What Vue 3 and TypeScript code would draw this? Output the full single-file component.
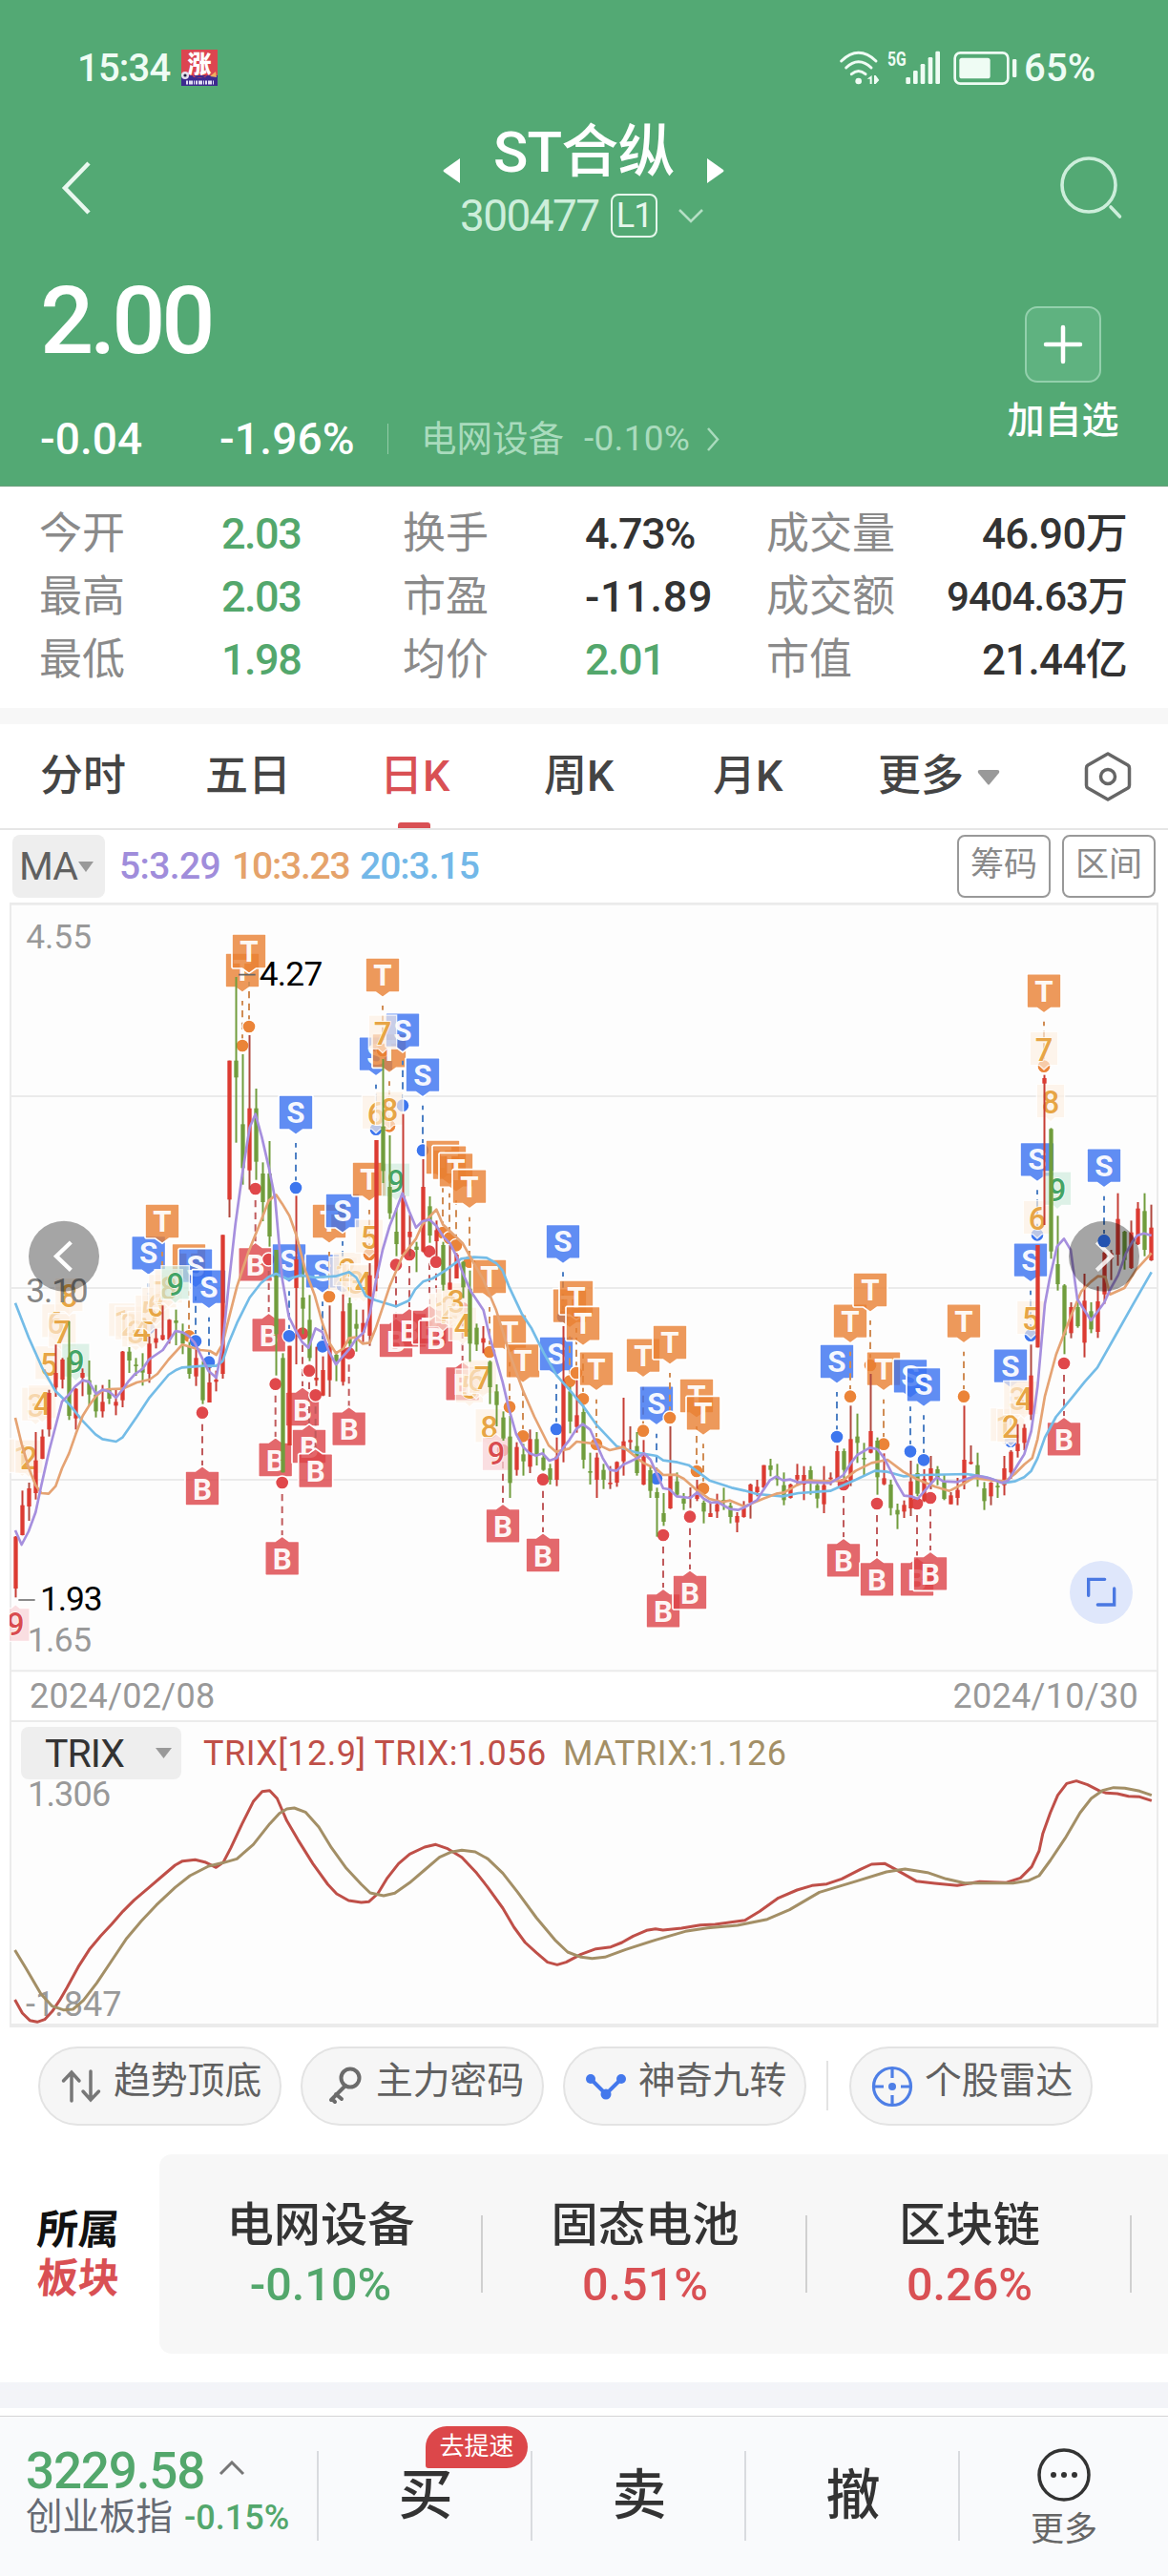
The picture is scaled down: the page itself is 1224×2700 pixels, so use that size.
<script setup lang="ts">
type Pt = [number, number]

/* ---------- quote data ---------- */
interface Stat { label: string; value: string; tone?: string }
const stats: Stat[][] = [
  [{ label: '今开', value: '2.03', tone: 'down' }, { label: '换手', value: '4.73%' }, { label: '成交量', value: '46.90万' }],
  [{ label: '最高', value: '2.03', tone: 'down' }, { label: '市盈', value: '-11.89', tone: 'neg' }, { label: '成交额', value: '9404.63万', tone: 'small' }],
  [{ label: '最低', value: '1.98', tone: 'down' }, { label: '均价', value: '2.01', tone: 'down' }, { label: '市值', value: '21.44亿' }],
]
const sectors = [
  { name: '电网设备', value: '-0.10%', tone: 'down' },
  { name: '固态电池', value: '0.51%', tone: 'up' },
  { name: '区块链', value: '0.26%', tone: 'up' },
]

/* ---------- K-line chart: three drawing units per pixel ---------- */
// high, low, body top, body bottom; a fifth value of 1 marks a falling day
const candleRows: number[][] = [
  [2010,2203,2012,2175],[1867,2008,1913,2007],[1842,1962,1860,1917],[1683,1895,1772,1875],[1675,1768,1697,1767],
  [1550,1697,1560,1675],[1408,1572,1497,1543],[1450,1546,1455,1518],[1335,1645,1448,1632,1],[1545,1675,1547,1640],
  [1483,1570,1497,1512],[1458,1600,1520,1565,1],[1535,1637,1565,1618,1],[1535,1637,1588,1618],[1518,1595,1550,1578,1],
  [1548,1630,1588,1600],[1428,1605,1430,1583],[1416,1497,1430,1458,1],[1450,1506,1471,1476,1],[1435,1537,1483,1496,1],
  [1383,1528,1405,1500],[1358,1420,1388,1402],[1285,1395,1378,1392],[1328,1405,1330,1392],[1298,1410,1332,1340,1],
  [1342,1438,1368,1405,1],[1400,1515,1415,1500,1],[1420,1538,1450,1508],[1460,1595,1478,1583,1],[1480,1590,1527,1590],
  [1490,1555,1518,1525],[1063,1515,1063,1500],[515,1008,515,952],[252,773,515,568,1],[495,905,715,853,1],
  [435,920,665,860],[603,890,665,833,1],[835,1020,870,960,1],[768,1100,870,1068,1],[1110,1505,1110,1375,1],
  [1435,1810,1450,1810,1],[1412,1725,1412,1725],[940,1470,1140,1230],[1150,1375,1260,1295,1],[1252,1460,1330,1450,1],
  [1415,1538,1512,1520],[1445,1570,1488,1568],[1285,1572,1412,1520],[1430,1523,1440,1468,1],[1250,1537,1303,1525],
  [1260,1420,1278,1405,1],[1298,1430,1343,1358,1],[1298,1400,1340,1370],[1152,1412,1190,1380],[765,1240,765,1200],
  [510,900,722,862,1],[750,1013,912,995,1],[978,1130,1053,1092,1],[683,1130,940,1125],[1000,1130,1053,1070],
  [1085,1180,1100,1110,1],[825,1118,912,1115],[942,1088,973,1065,1],[1018,1130,1048,1083],[1085,1238,1095,1220,1],
  [1095,1235,1213,1235],[1120,1200,1125,1200],[1145,1262,1148,1228,1],[1175,1462,1232,1405,1],[1342,1428,1355,1408,1],
  [1350,1435,1388,1402],[1458,1595,1462,1542,1],[1533,1665,1555,1598,1],[1618,1710,1637,1703,1],[1632,1890,1697,1843,1],
  [1715,1820,1730,1802],[1720,1820,1753,1775,1],[1675,1812,1705,1792],[1683,1788,1705,1753,1],[1735,1805,1763,1802,1],
  [1783,1848,1797,1833,1],[1700,1853,1760,1833],[1350,1778,1525,1740],[1540,1687,1555,1650,1],[1520,1685,1630,1667],
  [1600,1798,1620,1770,1],[1748,1848,1806,1810,1],[1748,1890,1763,1833],[1783,1862,1802,1833,1],[1790,1862,1842,1847],
  [1775,1855,1777,1842],[1575,1820,1712,1775],[1665,1740,1708,1715],[1683,1820,1727,1812,1],[1708,1850,1760,1848],
  [1790,1890,1803,1868,1],[1858,2012,1872,1890,1],[1875,1978,1938,1965,1],[1665,1925,1820,1923],[1810,1885,1838,1880,1],
  [1875,1928,1892,1908,1],[1857,1922,1885,1890],[1833,1900,1880,1893],[1898,1970,1905,1933,1],[1903,1950,1938,1950],
  [1877,1953,1910,1933],[1858,1928,1896,1900,1],[1905,1970,1915,1950,1],[1935,1998,1947,1967],[1900,1952,1922,1950],
  [1845,1955,1848,1905],[1833,1885,1855,1872],[1787,1860,1787,1857],[1767,1822,1788,1802,1],[1783,1852,1822,1832,1],
  [1810,1913,1850,1897,1],[1845,1892,1848,1890],[1783,1850,1818,1832],[1790,1897,1818,1848],[1790,1880,1803,1835,1],
  [1845,1922,1850,1892,1],[1790,1938,1850,1910],[1810,1850,1826,1830],[1725,1840,1743,1830],[1735,1835,1743,1802,1],
  [1600,1853,1705,1840],[1625,1780,1697,1717,1],[1717,1818,1764,1768,1],[1500,1750,1680,1748],[1700,1880,1710,1825,1],
  [1750,1850,1828,1847],[1833,1945,1848,1922,1],[1908,1988,1928,1942,1],[1898,1953,1912,1933],[1773,1947,1838,1923],
  [1783,1885,1812,1877,1],[1800,1903,1830,1900],[1758,1863,1797,1835],[1790,1850,1800,1830,1],[1818,1897,1840,1893,1],
  [1872,1910,1882,1910],[1827,1913,1865,1890],[1600,1863,1770,1845],[1725,1785,1777,1783],[1748,1855,1787,1825,1],
  [1840,1928,1860,1900,1],[1840,1913,1842,1885],[1840,1890,1852,1856,1],[1758,1882,1797,1850],[1740,1830,1745,1810],
  [1658,1763,1720,1743],[1658,1740,1670,1717],[1408,1645,1505,1628],[1095,1417,1095,1417],[560,1032,570,587],
  [727,1138,730,1115,1],[1003,1238,1155,1218,1],[1218,1438,1222,1378,1],[1275,1388,1290,1372],[1275,1355,1290,1350,1],
  [1185,1448,1270,1402],[1275,1372,1303,1360,1],[1225,1387,1272,1368],[1110,1280,1118,1250],[1110,1205,1120,1138],
  [932,1160,1013,1125],[1050,1172,1053,1142,1],[1018,1170,1055,1167],[960,1095,980,1092],[932,1130,988,1110,1],
  [968,1145,1040,1143],
]
const candles = candleRows.map(([high, low, top, bottom, fall], i) => ({
  x: 49.5 + i * 21, high, low, top, h: Math.max(5, bottom - top),
  body: fall ? '#709d3d' : '#dc3b32',
  wick: fall ? '#709d3d' : i % 3 === 2 ? '#b0483f' : '#c63d35',
}))

const ma5 = '48,1992 68,2037 90,1995 112,1935 130,1850 155,1740 195,1587 215,1567 238,1538 260,1520 280,1525 302,1563 322,1550 342,1555 365,1575 385,1550 405,1522 425,1500 448,1485 468,1455 512,1425 552,1365 575,1370 594,1382 612,1402 655,1490 680,1512 700,1405 720,1210 740,1030 762,870 785,725 803,683 823,755 845,850 865,950 887,1200 908,1320 930,1365 950,1400 970,1418 992,1357 1013,1368 1034,1430 1056,1470 1100,1420 1118,1392 1143,1370 1163,1310 1183,1200 1203,1110 1225,1035 1245,985 1265,932 1287,990 1308,1040 1328,1020 1350,1015 1372,1035 1395,1070 1415,1090 1435,1130 1458,1190 1480,1240 1520,1300 1540,1385 1580,1525 1600,1610 1623,1690 1645,1730 1665,1750 1685,1757 1706,1750 1727,1773 1750,1765 1770,1733 1790,1708 1813,1672 1832,1658 1855,1675 1875,1720 1895,1765 1917,1802 1938,1805 1960,1785 1982,1775 2003,1765 2025,1750 2045,1770 2065,1815 2085,1860 2105,1863 2127,1885 2170,1890 2192,1873 2213,1893 2235,1905 2256,1903 2295,1925 2320,1928 2340,1920 2380,1897 2400,1865 2420,1835 2440,1823 2462,1835 2485,1832 2505,1840 2610,1843 2650,1820 2675,1780 2695,1755 2735,1732 2758,1737 2780,1765 2820,1845 2842,1883 2865,1885 2885,1893 2905,1870 2945,1825 2965,1838 3010,1840 3070,1820 3110,1828 3150,1843 3170,1835 3200,1785 3220,1753 3242,1680 3262,1540 3285,1280 3300,1200 3323,1100 3345,1075 3366,1110 3387,1265 3430,1332 3472,1275 3490,1235 3515,1190 3540,1120 3560,1085 3575,1065 3597,1058 3620,1065'
const ma10 = '48,1638 68,1720 90,1795 112,1850 130,1875 153,1877 175,1853 195,1797 217,1750 238,1690 260,1632 280,1600 302,1570 322,1553 342,1548 385,1547 430,1527 470,1518 495,1500 530,1455 573,1408 630,1425 660,1428 680,1440 700,1405 722,1315 745,1225 780,1120 820,1020 845,955 868,937 887,965 910,1003 932,1065 960,1175 990,1255 1015,1345 1037,1405 1056,1435 1080,1420 1097,1388 1118,1385 1140,1405 1163,1402 1180,1360 1225,1225 1265,1130 1308,1075 1328,1030 1372,983 1392,1030 1455,1090 1480,1135 1520,1205 1560,1300 1600,1430 1645,1555 1680,1635 1725,1725 1748,1745 1790,1735 1813,1713 1875,1720 1917,1740 1960,1730 2023,1780 2065,1800 2085,1818 2125,1817 2150,1830 2190,1865 2230,1893 2270,1903 2295,1898 2340,1917 2400,1892 2440,1877 2465,1873 2505,1850 2540,1835 2590,1838 2650,1835 2690,1805 2740,1780 2790,1770 2840,1808 2880,1830 2940,1855 2985,1868 3030,1845 3060,1827 3120,1835 3160,1838 3190,1815 3220,1785 3245,1765 3262,1705 3285,1570 3320,1440 3366,1320 3400,1240 3430,1210 3452,1193 3475,1195 3490,1250 3535,1230 3570,1175 3620,1120'
const ma20 = '48,1277 90,1385 132,1480 175,1555 217,1595 260,1648 300,1690 322,1705 365,1713 385,1700 430,1635 468,1577 530,1503 555,1487 573,1480 640,1475 680,1475 700,1460 720,1400 745,1340 785,1260 820,1215 845,1195 868,1185 905,1202 945,1190 990,1197 1055,1193 1098,1180 1120,1197 1150,1255 1180,1268 1245,1288 1285,1270 1305,1235 1330,1210 1360,1200 1400,1175 1450,1138 1490,1133 1530,1135 1560,1152 1580,1175 1600,1225 1640,1310 1670,1355 1710,1435 1750,1505 1790,1550 1832,1600 1875,1660 1938,1727 1960,1735 2003,1748 2065,1758 2085,1772 2130,1778 2165,1787 2190,1805 2230,1835 2300,1858 2340,1867 2380,1878 2460,1885 2510,1875 2610,1868 2690,1833 2750,1805 2790,1808 2840,1822 2900,1818 3040,1815 3100,1825 3155,1843 3190,1838 3220,1825 3242,1805 3262,1765 3285,1700 3320,1635 3366,1580 3410,1525 3450,1480 3515,1365 3560,1285 3620,1180'

// signal flags: x and the flag's top edge
const sFlags: Pt[] = [[467,1066],[615,1106],[657,1172],[930,624],[909,1090],[1014,1123],[1077,933],[1182,440],[1266,365],[1329,506],[1770,1030],[1749,1383],[2064,1538],[2631,1407],[2862,1453],[2904,1480],[3177,1421],[3240,1088],[3261,772],[3471,791]]
const tFlags: Pt[] = [[510,966],[594,1090],[762,177],[783,117],[1035,966],[1161,834],[1203,192],[1224,430],[1392,765],[1413,782],[1434,805],[1476,857],[1539,1140],[1602,1313],[1644,1405],[1791,1232],[1812,1206],[1833,1288],[1875,1430],[2022,1388],[2106,1347],[2190,1515],[2211,1570],[2673,1280],[2736,1182],[2778,1430],[3030,1280],[3282,242]]
const bDots: Pt[] = [[636,1622],[803,918],[845,1140],[866,1532],[887,1842],[951,1373],[972,1490],[992,1567],[1097,1435],[1245,1157],[1287,1125],[1350,1115],[1371,1148],[1454,1293],[1581,1740],[1707,1832],[2085,2007],[2169,1949],[2652,1848],[2757,1908],[2883,1908],[2925,1890],[3345,1467]]

interface Flag { k: string; x: number; y: number; dot: number; fill: string; solid: string; dash: string }
const flags: Flag[] = [
  ...bDots.map(([x, d]) => ({ k: 'B', x, y: d + 184, dot: d, fill: '#dc4247', solid: '#e0484b', dash: '#c05a5c' })),
  ...sFlags.map(([x, y]) => ({ k: 'S', x, y, dot: y + 291, fill: '#3871f0', solid: '#3d76ee', dash: '#4d80c4' })),
  ...tFlags.map(([x, y]) => ({ k: 'T', x, y, dot: y + 291, fill: '#e98032', solid: '#eb8438', dash: '#d08c54' })),
].sort((a, b) => a.x - b.x)

function flagPath(f: Flag): string {
  const l = f.x - 54, r = f.x + 54, t = f.y, b = f.y + 108
  return f.k === 'B'
    ? `M${l + 3} ${t}H${f.x - 22}L${f.x} ${t - 16}L${f.x + 22} ${t}H${r - 3}L${r} ${t + 3}V${b - 3}L${r - 3} ${b}H${l + 3}L${l} ${b - 3}V${t + 3}Z`
    : `M${l + 3} ${t}H${r - 3}L${r} ${t + 3}V${b - 3}L${r - 3} ${b}H${f.x + 22}L${f.x} ${b + 16}L${f.x - 22} ${b}H${l + 3}L${l} ${b - 3}V${t + 3}Z`
}

// nine-turn counters: digit, x, centre y
const counts: [string, number, number, string][] = [
  ['1',70,1762,'o'],['2',91,1765,'o'],['3',112,1600,'o'],['4',133,1593,'o'],['5',154,1470,'o'],['6',175,1338,'o'],['7',196,1368,'o'],['8',217,1256,'o'],['9',238,1462,'g'],
  ['1',385,1335,'o'],['2',406,1345,'o'],['3',427,1368,'o'],['4',446,1362,'o'],['5',469,1310,'o'],['6',490,1286,'o'],['7',511,1245,'o'],['8',530,1230,'o'],['9',551,1218,'g'],
  ['1',1079,1190,'o'],['2',1092,1175,'o'],['3',1118,1212,'o'],['4',1143,1215,'o'],['5',1161,1072,'o'],['6',1182,682,'o'],['7',1203,430,'o'],['8',1224,670,'o'],['9',1245,895,'g'],
  ['1',1392,1305,'o'],['2',1413,1290,'o'],['3',1434,1272,'o'],['4',1455,1348,'o'],['5',1476,1543,'o'],['6',1497,1518,'o'],['7',1518,1513,'o'],['8',1538,1668,'o'],['9',1560,1750,'r'],
  ['1',3157,1665,'o'],['2',3178,1667,'o'],['3',3199,1580,'o'],['4',3220,1580,'o'],['5',3241,1328,'o'],['6',3261,1013,'o'],['7',3282,482,'o'],['8',3303,647,'o'],['9',3324,922,'g'],
  ['9',49,2287,'r'],
]
const tints: Record<string, { bg: string; fg: string }> = {
  o: { bg: '#fdf0e2', fg: '#e7a545' },
  g: { bg: '#cdebdc', fg: '#43a467' },
  r: { bg: '#f8d3d7', fg: '#d94b50' },
}

/* ---------- TRIX lines ---------- */
const trix = '20,1038 30,1080 40,1103 50,1108 60,1100 70,1075 80,1040 90,1000 105,935 120,880 135,838 150,800 165,760 180,725 200,685 220,645 235,615 245,602 262,598 275,605 290,622 300,605 310,560 325,485 340,415 352,383 362,380 372,405 385,475 400,535 420,610 440,675 452,705 468,726 485,732 495,730 507,705 520,655 535,610 550,580 570,558 585,550 600,562 620,590 640,640 655,685 675,750 690,810 705,858 720,890 735,920 748,928 760,920 780,895 800,878 820,872 835,858 850,838 868,820 880,815 890,819 915,813 940,803 960,801 1000,788 1020,760 1045,718 1070,693 1090,679 1110,674 1130,658 1155,628 1170,612 1188,610 1200,625 1230,665 1255,672 1285,679 1315,667 1350,670 1370,655 1385,620 1395,570 1400,515 1410,450 1420,395 1432,358 1445,350 1460,362 1475,380 1485,388 1500,390 1515,398 1530,400 1546,412'
const matrix = '20,882 35,940 55,1020 70,1058 85,1070 98,1068 112,1040 130,985 150,915 170,845 190,790 210,740 235,685 255,648 280,618 300,607 318,595 340,550 362,485 375,452 385,438 395,435 410,448 428,495 445,560 465,625 485,675 497,702 515,711 530,703 550,670 570,630 590,590 605,574 620,568 638,573 655,595 675,640 695,700 720,780 745,850 762,888 780,904 795,908 812,904 840,880 880,850 920,823 950,812 990,804 1030,785 1060,755 1100,700 1150,665 1190,636 1215,627 1245,638 1270,658 1295,671 1360,671 1380,664 1395,648 1410,600 1430,530 1450,450 1465,405 1480,380 1495,371 1510,373 1530,382 1546,395'
</script>

<template>
  <div class="app">
    <header class="hero">
      <div class="status">
        <span class="clock">15:34</span>
        <svg class="app-icon" width="38" height="38" viewBox="0 0 38 38">
          <rect width="38" height="29" fill="#dc4550" />
          <path d="M0 27H38V38H0Z" fill="#3d2a8f" />
          <path d="M10 25Q19 34 29 25L25 29H13Z" fill="#e8404a" />
          <circle cx="4" cy="27" r="4" fill="#e6e0ee" /><circle cx="4" cy="27" r="1.6" fill="#252040" />
          <path d="M30 28L36 23L37 29Z" fill="#f0b060" />
          <text x="19" y="24" text-anchor="middle" font-size="25" font-weight="900" fill="#fff">涨</text>
          <path d="M5 34.500H35" stroke="#e3def5" stroke-width="4" stroke-dasharray="2 1 4 1 1 1" />
        </svg>
        <svg class="signals" width="194" height="42" viewBox="290 60 582 126" fill="none" stroke="#effcf4">
          <g stroke-width="9" stroke-linecap="round">
            <path d="M304 102Q331 76 358 76Q386 76 413 102M319 123Q338 104 358 104Q379 104 398 123M336 143Q358 124 380 143" />
          </g>
          <circle cx="358" cy="165" r="10" fill="#effcf4" stroke="none" />
          <path d="M385 158L400 147V174H394V158ZM407 147H412L423 162L412 174H407Z" fill="#effcf4" stroke="none" />
          <text x="449" y="116" font-size="60" font-weight="700" textLength="59" lengthAdjust="spacingAndGlyphs" fill="#effcf4" stroke="none">5G</text>
          <g fill="#effcf4" stroke="none">
            <rect x="507" y="153" width="14" height="21" rx="4" /><rect x="530" y="132" width="14" height="42" rx="4" />
            <rect x="553" y="111" width="14" height="63" rx="4" /><rect x="577" y="90" width="14" height="84" rx="4" />
            <rect x="600" y="71" width="14" height="103" rx="4" /><rect x="675" y="92" width="97" height="65" rx="8" />
            <rect x="842" y="96" width="13" height="57" rx="4" />
          </g>
          <rect x="661" y="76" width="167" height="97" rx="17" stroke-width="8" />
        </svg>
        <span class="pct">65%</span>
      </div>

      <div class="title-bar">
        <svg class="back" width="34" height="60" viewBox="0 0 34 60" fill="none" stroke="#e9f8ef" stroke-width="4.500"><path d="M30 4L5 30L30 56" /></svg>
        <svg class="tri l" width="20" height="28" viewBox="0 0 20 28"><path d="M18 1V27L1 15Q0 14 1 13Z" fill="#fff" /></svg>
        <div class="name-box">
          <h1>ST合纵</h1>
          <div class="code-row">
            <span class="code">300477</span><span class="level">L1</span>
            <svg width="28" height="16" viewBox="0 0 28 16" fill="none" stroke="#b5dfc5" stroke-width="2.500"><path d="M2 2L14 14L26 2" /></svg>
          </div>
        </div>
        <svg class="tri r" width="20" height="28" viewBox="0 0 20 28"><path d="M2 1V27L19 15Q20 14 19 13Z" fill="#fff" /></svg>
        <svg class="search" width="68" height="68" viewBox="0 0 68 68" fill="none" stroke="#cdeedb" stroke-width="3.600" stroke-linecap="round">
          <circle cx="32" cy="32" r="28" /><path d="M55 55L64.500 65" />
        </svg>
      </div>

      <div class="quote">
        <div class="quote-main">
          <div class="price">2.00</div>
          <div class="change-row">
            <span class="delta">-0.04</span><span class="ratio">-1.96%</span><i class="bar" />
            <span class="industry">电网设备</span><span class="ind-pct">-0.10%</span>
            <svg width="15" height="27" viewBox="0 0 15 27" fill="none" stroke="#a9dbbd" stroke-width="2.500"><path d="M2 2L12 13.500L2 25" /></svg>
          </div>
        </div>
        <div class="add">
          <div class="add-btn"><svg width="42" height="42" viewBox="0 0 42 42" stroke="#fff" stroke-width="4.500" stroke-linecap="round"><path d="M21 3V39M3 21H39" /></svg></div>
          <span>加自选</span>
        </div>
      </div>
    </header>

    <section class="stats">
      <div v-for="(row, r) in stats" :key="r" class="stat-row">
        <template v-for="(s, c) in row" :key="s.label">
          <span class="label">{{ s.label }}</span>
          <span class="value" :class="[s.tone, { last: c === 2 }]">{{ s.value }}</span>
        </template>
      </div>
    </section>
    <div class="band" />

    <nav class="tabs">
      <span class="t1">分时</span><span class="t2">五日</span><span class="t3 active">日K</span><span class="t4">周K</span><span class="t5">月K</span><span class="t6">更多</span>
      <svg class="caret" width="24" height="16" viewBox="0 0 24 16"><path d="M3 0H21Q24 0 23 3L13 15Q12 16 11 15L1 3Q0 0 3 0Z" fill="#999" /></svg>
      <svg class="hex" width="50" height="54" viewBox="0 0 50 54" fill="none" stroke="#666" stroke-width="3.500" stroke-linejoin="round"><path d="M25 3L46 15Q47.500 16 47.500 18V36Q47.500 38 46 39L25 51L4 39Q2.500 38 2.500 36V18Q2.500 16 4 15Z" /><circle cx="25" cy="27" r="7.500" /></svg>
    </nav>

    <div class="ma-bar">
      <span class="ma-chip">MA<svg width="16" height="11" viewBox="0 0 16 11"><path d="M0 0H16L8 11Z" fill="#999" /></svg></span>
      <span class="m5">5:3.29</span><span class="m10">10:3.23</span><span class="m20">20:3.15</span>
      <span class="btn first">筹码</span><span class="btn">区间</span>
    </div>

    <svg class="kline" width="1224" height="808" viewBox="0 18 3672 2424">
      <defs><clipPath id="plot"><rect x="30" y="18" width="3612" height="2424" /></clipPath></defs>
      <rect x="33" y="20" width="3606" height="2416" fill="#fdfdfd" />
      <g stroke="#ebebeb" stroke-width="6">
        <path d="M30 22H3642" stroke-width="8" /><path d="M30 627H3642M30 1230H3642M30 1833H3642" /><path d="M30 2434H3642" /><path d="M33 18V2442M3639 18V2442" />
      </g>
      <g clip-path="url(#plot)">
        <g v-for="(f, i) in flags" :key="'f' + i">
          <path :d="f.k === 'B' ? `M${f.x} ${f.dot + 36}V${f.y - 18}` : `M${f.x} ${f.y + 150}V${f.dot - 14}`" :stroke="f.dash" stroke-width="6" stroke-dasharray="22 16" :stroke-dashoffset="f.k === 'B' ? 0 : 8" />
          <circle :cx="f.x" :cy="f.dot" r="21" :fill="f.solid" stroke="#fff" stroke-width="4" />
          <path :d="flagPath(f)" :fill="f.fill" fill-opacity=".8" stroke="#fff" stroke-width="5" />
          <text class="flag-text" :x="f.x" :y="f.k === 'B' ? f.y + 89 : f.y + 87">{{ f.k }}</text>
        </g>
        <g v-for="([d, x, y, t], i) in counts" :key="'c' + i">
          <path v-if="t === 'r'" :d="`M${x - 44} ${y - 50}H${x - 14}L${x} ${y - 62}L${x + 14} ${y - 50}H${x + 44}V${y + 54}H${x - 44}Z`" :fill="tints[t].bg" fill-opacity=".75" stroke="#fff" stroke-opacity=".8" stroke-width="4" />
          <path v-else :d="`M${x - 44} ${y - 58}H${x + 44}V${y + 48}H${x + 14}L${x} ${y + 61}L${x - 14} ${y + 48}H${x - 44}Z`" :fill="tints[t].bg" fill-opacity=".66" stroke="#fff" stroke-opacity=".8" stroke-width="4" />
          <text class="count-text" :x="x" :y="y + 35" :fill="tints[t].fg">{{ d }}</text>
        </g>
        <g v-for="(c, i) in candles" :key="'k' + i">
          <path :d="`M${c.x} ${c.high}V${c.low}`" :stroke="c.wick" stroke-width="6" />
          <rect :x="c.x - 6.500" :y="c.top" width="13" :height="c.h" :fill="c.body" />
        </g>
        <g fill="none" stroke-width="8" stroke-linejoin="round">
          <polyline :points="ma20" stroke="#74bce7" /><polyline :points="ma10" stroke="#e5a373" /><polyline :points="ma5" stroke="#a68fde" />
        </g>
      </g>
      <path d="M750 245H803M58 2211H110" stroke="#666" stroke-width="5" />
      <g font-size="106">
        <text x="815" y="279" textLength="200">4.27</text>
        <text x="126" y="2243" textLength="197">1.93</text>
        <g fill="#999">
          <text x="82" y="161" textLength="206">4.55</text>
          <text x="86" y="2372" textLength="202">1.65</text>
          <text x="82" y="1275" textLength="196" fill="#858585">3.10</text>
        </g>
      </g>
      <g fill="#000" fill-opacity=".35"><circle cx="201" cy="1130" r="111" /><circle cx="3471" cy="1130" r="111" /></g>
      <g fill="none" stroke="#fff" stroke-width="13"><path d="M223 1086L177 1130L223 1174" /><path d="M3448 1086L3494 1130L3448 1174" stroke-opacity=".85" /></g>
      <circle cx="3471" cy="1082" r="20" fill="#2353b0" />
      <circle cx="3462" cy="2187" r="99" fill="#dfe7fb" />
      <path d="M3473 2146H3422V2197M3503 2175V2226H3451" fill="none" stroke="#4a78e2" stroke-width="10" stroke-linecap="round" />
    </svg>

    <div class="dates"><span>2024/02/08</span><span>2024/10/30</span></div>

    <section class="trix">
      <div class="trix-head">
        <span class="trix-chip">TRIX<svg width="17" height="11" viewBox="0 0 17 11"><path d="M0 0H17L8.500 11Z" fill="#999" /></svg></span>
        <span class="tx1">TRIX[12.9] TRIX:1.056</span><span class="tx2">MATRIX:1.126</span>
      </div>
      <div class="axis hi">1.306</div>
      <div class="axis lo">-1.847</div>
      <svg class="trix-plot" width="1224" height="320" viewBox="0 165 1568 960" preserveAspectRatio="none" fill="none" stroke-width="3" stroke-linejoin="round">
        <polyline :points="trix" stroke="#bf4f48" vector-effect="non-scaling-stroke" />
        <polyline :points="matrix" stroke="#a38f66" vector-effect="non-scaling-stroke" />
      </svg>
    </section>

    <div class="tools">
      <span class="pill">
        <svg width="44" height="44" viewBox="0 0 44 44" fill="none" stroke="#777" stroke-width="3.500" stroke-linecap="round"><path d="M12 37V7M3.500 16L12 7L20 16M32 6V36M24 27L32 36L40.500 27" /></svg>趋势顶底
      </span>
      <span class="pill">
        <svg width="44" height="44" viewBox="0 0 44 44" fill="none" stroke="#6b6b6b" stroke-width="4" stroke-linecap="round"><circle cx="29" cy="13" r="9.500" /><path d="M24 21L9 36M14 30L20 35M10 35L13 38" /></svg>主力密码
      </span>
      <span class="pill">
        <svg width="44" height="44" viewBox="0 0 44 44" fill="none" stroke="#4478ec" stroke-width="4"><path d="M6 14L22 30L38 14" /><g fill="#4478ec" stroke="none"><circle cx="6" cy="14" r="5" /><circle cx="38" cy="14" r="5" /><circle cx="22" cy="30" r="5.500" /></g></svg>神奇九转
      </span>
      <i />
      <span class="pill">
        <svg width="44" height="44" viewBox="0 0 44 44" fill="none" stroke="#4e7fe6" stroke-width="3.200"><circle cx="22" cy="22" r="19.500" /><path d="M22 3V13M22 31V41M3 22H13M31 22H41" /><circle cx="22" cy="22" r="4" fill="#4e7fe6" stroke="none" /></svg>个股雷达
      </span>
    </div>

    <section class="sectors">
      <div class="sec-title"><span>所属</span><span class="up">板块</span></div>
      <div class="sec-list">
        <div v-for="s in sectors" :key="s.name" class="sec"><b>{{ s.name }}</b><em :class="s.tone">{{ s.value }}</em></div>
      </div>
    </section>
    <div class="band2" />

    <footer class="dock">
      <div class="index">
        <div class="idx-top">3229.58<svg width="28" height="16" viewBox="0 0 28 16" fill="none" stroke="#777" stroke-width="3"><path d="M2 14L14 2L26 14" /></svg></div>
        <div class="idx-sub">创业板指<span>-0.15%</span></div>
      </div>
      <div class="act">买<span class="tag">去提速</span></div>
      <div class="act">卖</div>
      <div class="act">撤</div>
      <div class="more">
        <svg width="60" height="60" viewBox="0 0 60 60"><circle cx="30" cy="30" r="26" fill="none" stroke="#333" stroke-width="3.500" /><g fill="#333"><circle cx="19" cy="30" r="3" /><circle cx="30" cy="30" r="3" /><circle cx="41" cy="30" r="3" /></g></svg>
        <span>更多</span>
      </div>
    </footer>
  </div>
</template>

<style>
body { background: #fff; }
</style>

<style scoped>
.app { width: 1224px; height: 2700px; overflow: hidden; background: #fff; color: #333; font-family: Roboto, "Noto Sans CJK SC", sans-serif; white-space: nowrap; }
.app * { box-sizing: border-box; }
svg { display: block; flex: none; }
.down { color: #53a76c; }
.up { color: #d95054; }

.hero { height: 510px; background: #53a974; color: #fff; display: flex; flex-direction: column; border-bottom: 1px solid #6b9e7d; }
.status { height: 94px; padding: 50px 0 0 81px; display: flex; color: #effcf4; font-size: 40px; line-height: 44px; font-weight: 500; }
.clock { width: 109px; letter-spacing: -.8px; }
.app-icon { margin-top: 2px; }
.signals { margin-left: 649px; }
.pct { margin-left: 2px; letter-spacing: .2px; }
.title-bar { height: 166px; display: flex; align-items: flex-start; }
.back { margin: 73px 0 0 63px; }
.tri { margin-top: 71px; }
.tri.l { margin-left: 367px; }
.name-box { width: 254px; }
.tri.r { margin-left: 1px; }
h1 { margin: 31px 0 0 33px; font-size: 60px; line-height: 70px; font-weight: 500; letter-spacing: -.8px; }
.code-row { display: flex; align-items: center; height: 46px; margin: 8px 0 0 -2px; }
.code { font-size: 46px; line-height: 46px; color: #cdeedb; letter-spacing: -1.6px; width: 159px; }
.level { width: 49px; height: 46px; border: 2px solid #e6f7ec; border-radius: 8px; font-size: 36px; line-height: 42px; text-align: center; color: #e6f7ec; letter-spacing: -1px; margin-right: 21px; }
.search { margin: 68px 0 0 350px; }
.quote { display: flex; }
.quote-main { width: 1053px; padding-left: 42px; }
.price { margin-top: 17px; height: 118px; font-size: 99px; line-height: 118px; font-weight: 500; letter-spacing: -4.300px; }
.change-row { display: flex; align-items: center; height: 46px; margin-top: 42px; font-size: 46px; line-height: 46px; font-weight: 500; }
.delta { width: 188px; letter-spacing: .1px; }
.ratio { width: 176px; letter-spacing: .2px; }
.bar { width: 1px; height: 32px; background: #93cca8; margin-right: 34px; }
.industry { font-size: 37.500px; color: #a9dbbd; width: 171px; font-weight: 400; }
.ind-pct { font-size: 37px; color: #a9dbbd; width: 128px; font-weight: 400; letter-spacing: .3px; }
.add { width: 122px; display: flex; flex-direction: column; align-items: center; padding-top: 61px; }
.add-btn { width: 80px; height: 80px; border: 2px solid #93d0ac; border-radius: 13px; background: #5fb280; display: flex; align-items: center; justify-content: center; }
.add span { font-size: 39px; line-height: 48px; margin-top: 16px; font-weight: 500; }

.stats { height: 232px; padding: 17px 43px 0 41px; }
.stat-row { display: flex; align-items: center; height: 66px; font-size: 45px; line-height: 66px; }
.label { width: 190px; color: #8a8a8a; }
.value { width: 191px; letter-spacing: -1.500px; padding-left: 1px; color: #333; font-weight: 500; }
.value.down { color: #53a76c; }
.value.neg { letter-spacing: .7px; }
.stat-row .label:nth-of-type(5) { width: 142px; }
.value.last { flex: 1; text-align: right; font-size: 44px; letter-spacing: -.7px; width: auto; }
.value.last.small { font-size: 42px; letter-spacing: -1px; }
.band { height: 17px; background: #f7f7f7; }

.tabs { height: 111px; border-bottom: 2px solid #e6e6e6; display: flex; align-items: flex-start; padding-left: 42px; font-size: 45px; line-height: 64px; color: #444; font-weight: 500; }
.tabs span { height: 109px; padding-top: 23px; }
.t1 { width: 173px; } .t2 { width: 183px; }
.t3 { width: 74px; margin-right: 98px; color: #d95054; position: relative; }
.t3::after { content: ""; position: absolute; left: 19px; bottom: 0; width: 34px; height: 6px; border-radius: 3px 3px 0 0; background: #d95054; }
.t4 { width: 177px; } .t5 { width: 173px; } .t6 { width: 104px; }
.caret { margin-top: 48px; }
.hex { margin: 28px 0 0 88px; }

.ma-bar { height: 76px; display: flex; align-items: flex-start; padding: 5px 13px 0; font-size: 39px; line-height: 66px; }
.ma-chip { width: 97px; height: 66px; background: #eee; border-radius: 8px; padding-left: 7px; font-size: 41px; color: #606060; display: flex; align-items: center; letter-spacing: -1px; margin-right: 15px; }
.ma-chip svg { margin-left: 1px; }
.m5, .m10, .m20 { font-weight: 500; }
.m5 { width: 118px; color: #a08ddb; letter-spacing: -.6px; }
.m10 { width: 134px; color: #e5a36b; letter-spacing: -1.200px; }
.m20 { color: #73b8e8; letter-spacing: -1px; }
.btn { width: 98px; height: 66px; border: 2px solid #999; border-radius: 8px; color: #8a8a8a; font-size: 35px; line-height: 60px; text-align: center; }
.btn.first { margin: 0 12px 0 auto; }

.kline text { font-family: Roboto, sans-serif; }
.kline .flag-text { font-size: 94px; font-weight: 700; text-anchor: middle; fill: #fff; fill-opacity: .95; }
.kline .count-text { font-size: 98px; font-weight: 500; text-anchor: middle; paint-order: stroke; stroke: #fffaf2; stroke-width: 4px; }

.dates { height: 51px; margin: 0 10px; padding: 0 19px; border: solid #ebebeb; border-width: 0 2px 2px; display: flex; justify-content: space-between; font-size: 36px; line-height: 49px; color: #999; letter-spacing: .3px; }
.trix { height: 320px; margin: 0 10px; border: solid #ebebeb; border-width: 0 2px 4px; background: #fdfdfd; position: relative; }
.trix-head { display: flex; align-items: flex-start; padding: 5px 0 0 10px; height: 60px; font-size: 36px; line-height: 56px; }
.trix-chip { width: 168px; height: 55px; background: #eee; border-radius: 8px; display: flex; align-items: center; justify-content: space-between; padding: 0 10px 0 25px; font-size: 41px; letter-spacing: -1px; margin-right: 23px; }
.tx1 { width: 377px; color: #bf4f48; letter-spacing: .5px; }
.tx2 { color: #a38f66; letter-spacing: .5px; }
.axis { color: #999; font-size: 36px; line-height: 42px; padding-left: 17px; letter-spacing: -.8px; }
.hi { margin-top: -5px; }
.lo { margin-top: 178px; padding-left: 15px; letter-spacing: 0; }
.trix-plot { position: absolute; left: -12px; top: 0; }

.tools { height: 133px; padding: 20px 0 0 40px; display: flex; }
.pill { width: 255px; height: 83px; border: 2px solid #e3e3e3; border-radius: 42px; background: #f6f6f6; margin-right: 20px; padding-left: 21px; display: flex; font-size: 38.800px; line-height: 68px; color: #606060; }
.pill svg { margin: 18px 12px 0 0; }
.tools i { width: 2px; height: 52px; background: #e3e3e3; margin: 15px 22px 0 1px; }

.sectors { height: 239px; display: flex; }
.sec-title { width: 167px; padding: 54px 0 0 39px; font-size: 43px; line-height: 51px; font-weight: 700; color: #111; display: flex; flex-direction: column; }
.sec-title span { transform: skewX(-4deg); width: 90px; }
.sec-title .up { color: #d95054; }
.sec-list { flex: 1; height: 209px; background: #f7f7f7; border-radius: 13px 0 0 13px; display: flex; overflow: hidden; }
.sec { flex: none; width: 340px; display: flex; flex-direction: column; align-items: center; padding: 43px 2px 0 0; position: relative; }
.sec::after { content: ""; position: absolute; right: 1px; top: 64px; width: 2px; height: 81px; background: #d0d0d0; }
.sec b { font-size: 49.300px; line-height: 62px; font-weight: 500; }
.sec em { font-style: normal; font-size: 48.500px; line-height: 60px; margin-top: 2px; font-weight: 500; }
.band2 { height: 27px; background: #f3f4f8; }

.dock { height: 168px; margin-top: 8px; border-top: 1px solid #d5d5d5; background: #f9fafc; display: flex; }
.index { width: 334px; padding: 29px 0 0 27px; color: #53a76c; position: relative; }
.idx-top { display: flex; align-items: center; font-size: 53px; line-height: 56px; font-weight: 500; letter-spacing: -1.200px; }
.idx-top svg { margin: -7px 0 0 15px; }
.idx-sub { font-size: 38.500px; line-height: 40px; color: #666a74; display: flex; }
.idx-sub span { font-size: 36px; color: #53a76c; margin-left: 12px; line-height: 42px; font-weight: 500; }
.act { width: 224px; padding-top: 48px; font-size: 57px; line-height: 70px; font-weight: 500; text-align: center; position: relative; }
.act::after, .index::after { content: ""; position: absolute; right: 0; top: 36px; width: 2px; height: 94px; background: #d9dbdf; }
.tag { position: absolute; left: 112px; top: 10px; width: 107px; height: 44px; border-radius: 22px 22px 22px 3px; background: #dc474a; color: #fff; font-size: 26px; font-weight: 400; line-height: 42px; }
.more { width: 218px; padding-top: 31px; display: flex; flex-direction: column; align-items: center; font-size: 35px; line-height: 50px; color: #666; }
.more span { margin-top: 3px; }
</style>
